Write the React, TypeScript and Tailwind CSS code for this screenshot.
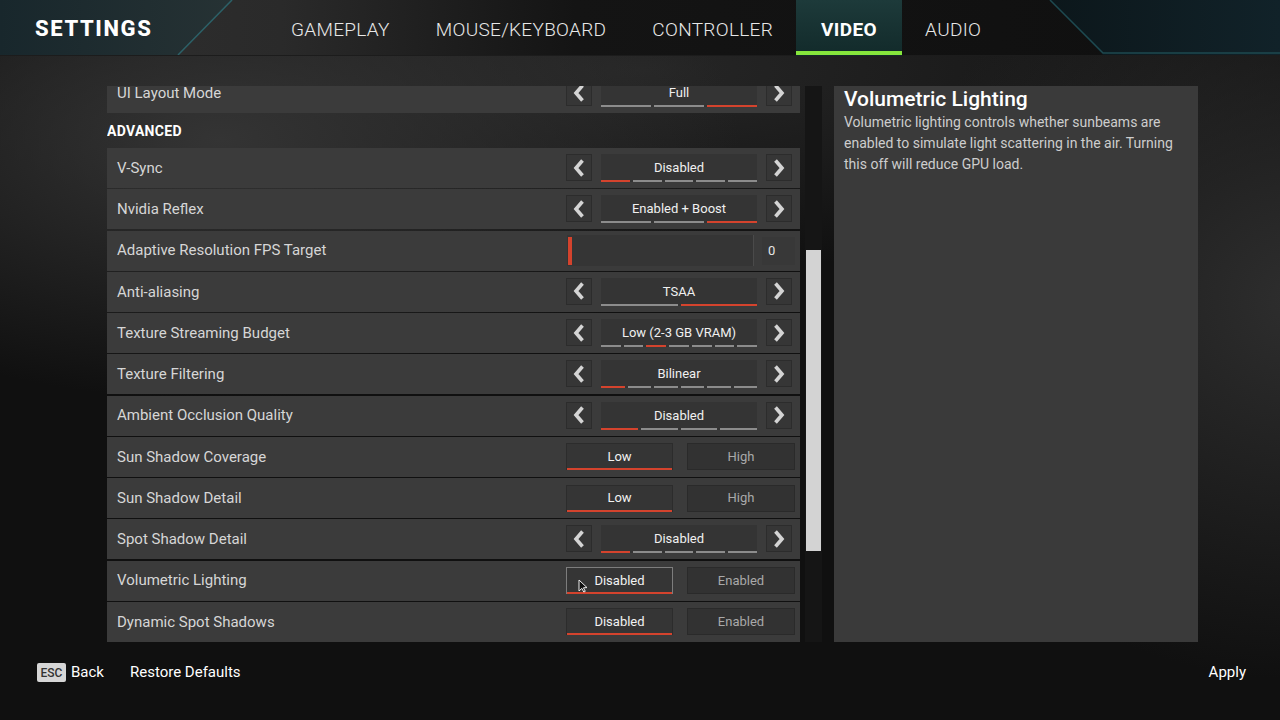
import { ReactNode } from "react";

type Row =
  | { label: string; kind: "select"; value: string; count: number; sel: number }
  | { label: string; kind: "toggle"; options: [string, string]; hover?: boolean }
  | { label: string; kind: "slider"; value: string };

const rows: Row[] = [
  { label: "V-Sync", kind: "select", value: "Disabled", count: 5, sel: 0 },
  { label: "Nvidia Reflex", kind: "select", value: "Enabled + Boost", count: 3, sel: 2 },
  { label: "Adaptive Resolution FPS Target", kind: "slider", value: "0" },
  { label: "Anti-aliasing", kind: "select", value: "TSAA", count: 2, sel: 1 },
  { label: "Texture Streaming Budget", kind: "select", value: "Low (2-3 GB VRAM)", count: 7, sel: 2 },
  { label: "Texture Filtering", kind: "select", value: "Bilinear", count: 6, sel: 0 },
  { label: "Ambient Occlusion Quality", kind: "select", value: "Disabled", count: 4, sel: 0 },
  { label: "Sun Shadow Coverage", kind: "toggle", options: ["Low", "High"] },
  { label: "Sun Shadow Detail", kind: "toggle", options: ["Low", "High"] },
  { label: "Spot Shadow Detail", kind: "select", value: "Disabled", count: 5, sel: 0 },
  { label: "Volumetric Lighting", kind: "toggle", options: ["Disabled", "Enabled"], hover: true },
  { label: "Dynamic Spot Shadows", kind: "toggle", options: ["Disabled", "Enabled"] },
];

const tabs = ["GAMEPLAY", "MOUSE/KEYBOARD", "CONTROLLER", "VIDEO", "AUDIO"];

function Chevron({ dir }: { dir: "left" | "right" }) {
  return (
    <svg width="12" height="18" viewBox="0 0 12 18">
      <path
        d={dir === "left" ? "M9.5 1.5 L3 9 L9.5 16.5" : "M2.5 1.5 L9 9 L2.5 16.5"}
        fill="none"
        stroke="#d4d4d4"
        strokeWidth="3.6"
        strokeLinejoin="miter"
      />
    </svg>
  );
}

function ArrowBox({ dir }: { dir: "left" | "right" }) {
  return (
    <div className="w-[26px] h-[27px] bg-[#363636] border border-[#2c2c2c] flex items-center justify-center">
      <Chevron dir={dir} />
    </div>
  );
}

function Selector({ value, count, sel }: { value: string; count: number; sel: number }) {
  return (
    <div className="flex items-start gap-[9px] pr-[8px]">
      <ArrowBox dir="left" />
      <div className="w-[156px] h-[28px] bg-[#343434] flex flex-col justify-between">
        <div className="pt-[2px] text-center text-[13px] leading-[24px] text-[#f0f0f0]">{value}</div>
        <div className="flex gap-[3px]">
          {Array.from({ length: count }).map((_, i) => (
            <div key={i} className={i === sel ? "flex-1 h-[2px] bg-[#d4432d]" : "flex-1 h-[2px] bg-[#8c8c8c]"} />
          ))}
        </div>
      </div>
      <ArrowBox dir="right" />
    </div>
  );
}

function Toggle({ options, hover }: { options: [string, string]; hover?: boolean }) {
  return (
    <div className="flex gap-[14px] pr-[5px]">
      <div
        className={
          "relative w-[107px] h-[27px] bg-[#353535] border flex items-center justify-center text-[13px] text-[#f2f2f2] " +
          (hover ? "border-[#7d7d7d]" : "border-[#2c2c2c]")
        }
      >
        {options[0]}
        <div className="absolute left-0 right-0 bottom-[-1px] h-[2px] bg-[#d4432d]" />
      </div>
      <div className="w-[108px] h-[27px] bg-[#323232] border border-[#2a2a2a] flex items-center justify-center text-[13px] text-[#a9a9a9]">
        {options[1]}
      </div>
    </div>
  );
}

function Slider({ value }: { value: string }) {
  return (
    <div className="flex items-center pr-[5px]">
      <div className="w-[187px] h-[31px] bg-[#353535] border-r border-[#4a4a4a] flex items-center pl-[1px]">
        <div className="w-[4px] h-[28px] bg-[#d4432d]" />
      </div>
      <div className="ml-[8px] w-[33px] h-[28px] bg-[#383838] flex items-center pl-[6px] text-[13px] text-[#e6e6e6]">
        {value}
      </div>
    </div>
  );
}

function SettingRow({ label, children }: { label: string; children: ReactNode }) {
  return (
    <div className="h-[40px] bg-[#3b3b3b] flex items-center justify-between pl-[10px] shrink-0">
      <span className="text-[15px] text-[#d6d6d6]">{label}</span>
      {children}
    </div>
  );
}

function HeaderArt() {
  return (
    <svg className="absolute inset-0" width="1280" height="56" viewBox="0 0 1280 56">
      <defs>
        <linearGradient id="hb" x1="0" x2="1" y1="0" y2="0">
          <stop offset="0" stopColor="#303030" />
          <stop offset="0.22" stopColor="#2a2a2a" />
          <stop offset="0.45" stopColor="#141414" />
          <stop offset="1" stopColor="#0f0f0f" />
        </linearGradient>
        <linearGradient id="hl" x1="0" x2="1" y1="0" y2="0">
          <stop offset="0" stopColor="#18272c" />
          <stop offset="1" stopColor="#263234" />
        </linearGradient>
        <linearGradient id="hr" x1="0" x2="1" y1="0" y2="0">
          <stop offset="0" stopColor="#0c171b" />
          <stop offset="1" stopColor="#112229" />
        </linearGradient>
      </defs>
      <rect width="1280" height="56" fill="url(#hb)" />
      <polygon points="0,0 232,0 178,55 0,55" fill="url(#hl)" />
      <line x1="232" y1="0" x2="178" y2="55" stroke="#2c6168" strokeWidth="1.5" />
      <polygon points="1050,0 1280,0 1280,55 1103,55" fill="url(#hr)" />
      <polyline points="1050,0 1103,53 1280,53" fill="none" stroke="#1e4950" strokeWidth="1.5" />
      <line x1="0" y1="55.5" x2="1280" y2="55.5" stroke="#1c1c1c" />
    </svg>
  );
}

function Cursor() {
  return (
    <svg className="absolute left-[578px] top-[579px]" width="10" height="14" viewBox="0 0 10 14">
      <path d="M1 1 L1 12 L3.8 9.4 L5.8 13 L7.3 12.3 L5.4 8.8 L9 8.6 Z" fill="#111" stroke="#eee" strokeWidth="1" />
    </svg>
  );
}

export default function App() {
  return (
    <div className="relative w-[1280px] h-[720px] overflow-hidden bg-[#101010] bg-[radial-gradient(ellipse_520px_260px_at_220px_140px,#343434,transparent),radial-gradient(ellipse_420px_380px_at_1300px_300px,#2e2e2e,transparent),radial-gradient(ellipse_700px_200px_at_640px_70px,#262626,transparent)] font-['Roboto',sans-serif]">
      {/* Header */}
      <header className="relative h-[56px] flex items-center">
        <HeaderArt />
        <div className="relative pl-[35px] pt-[1px] w-[268px] text-[22px] font-extrabold tracking-[1.6px] text-white">SETTINGS</div>
        <nav className="relative flex h-full">
          {tabs.map((t) =>
            t === "VIDEO" ? (
              <div
                key={t}
                className="relative h-full px-[25px] pt-[5px] flex items-center bg-[linear-gradient(#1d3a3a,#122a2a)] text-[19px] font-bold tracking-[0.4px] text-white"
              >
                {t}
                <div className="absolute left-0 right-0 bottom-[1px] h-[4px] bg-[#86e63c]" />
              </div>
            ) : (
              <div key={t} className="h-full px-[23px] pt-[5px] flex items-center text-[19px] font-light tracking-[0.3px] text-[#e8e8e8]">
                {t}
              </div>
            )
          )}
        </nav>
      </header>

      {/* Main */}
      <main className="flex pl-[107px] pt-[30px]">
        <div className="w-[693px] h-[556px] overflow-hidden flex flex-col">
          <div className="mt-[-13px]">
            <SettingRow label="UI Layout Mode">
              <Selector value="Full" count={3} sel={2} />
            </SettingRow>
          </div>
          <div className="h-[35px] pt-[1px] flex items-center text-[14px] font-bold text-white tracking-[0.3px] shrink-0">ADVANCED</div>
          <div className="flex flex-col gap-[1.27px]">
            {rows.map((r) => (
              <SettingRow key={r.label} label={r.label}>
                {r.kind === "select" && <Selector value={r.value} count={r.count} sel={r.sel} />}
                {r.kind === "toggle" && <Toggle options={r.options} hover={r.hover} />}
                {r.kind === "slider" && <Slider value={r.value} />}
              </SettingRow>
            ))}
          </div>
        </div>

        <div className="ml-[5px] w-[17px] h-[556px] bg-[#151515] pt-[164px] px-[1px]">
          <div className="h-[301px] bg-[#d3d3d3]" />
        </div>

        <aside className="ml-[12px] w-[364px] h-[556px] bg-[#3a3a3a] pl-[10px]">
          <div className="text-[21px] leading-[26px] font-medium text-white">Volumetric Lighting</div>
          <p className="text-[14px] leading-[21px] text-[#cdcdcd]">
            Volumetric lighting controls whether sunbeams are
            <br />
            enabled to simulate light scattering in the air. Turning
            <br />
            this off will reduce GPU load.
          </p>
        </aside>
      </main>

      {/* Footer */}
      <footer className="flex items-center mt-[21px] pl-[37px] pr-[34px] h-[19px]">
        <span className="h-[19px] w-[29px] bg-[#d6d6d6] rounded-[2px] flex items-center justify-center text-[12px] font-medium text-[#333]">
          ESC
        </span>
        <span className="ml-[5px] text-[15px] text-white">Back</span>
        <span className="ml-[26px] text-[15px] text-white">Restore Defaults</span>
        <span className="ml-auto text-[15px] text-white">Apply</span>
      </footer>

      <Cursor />
    </div>
  );
}
